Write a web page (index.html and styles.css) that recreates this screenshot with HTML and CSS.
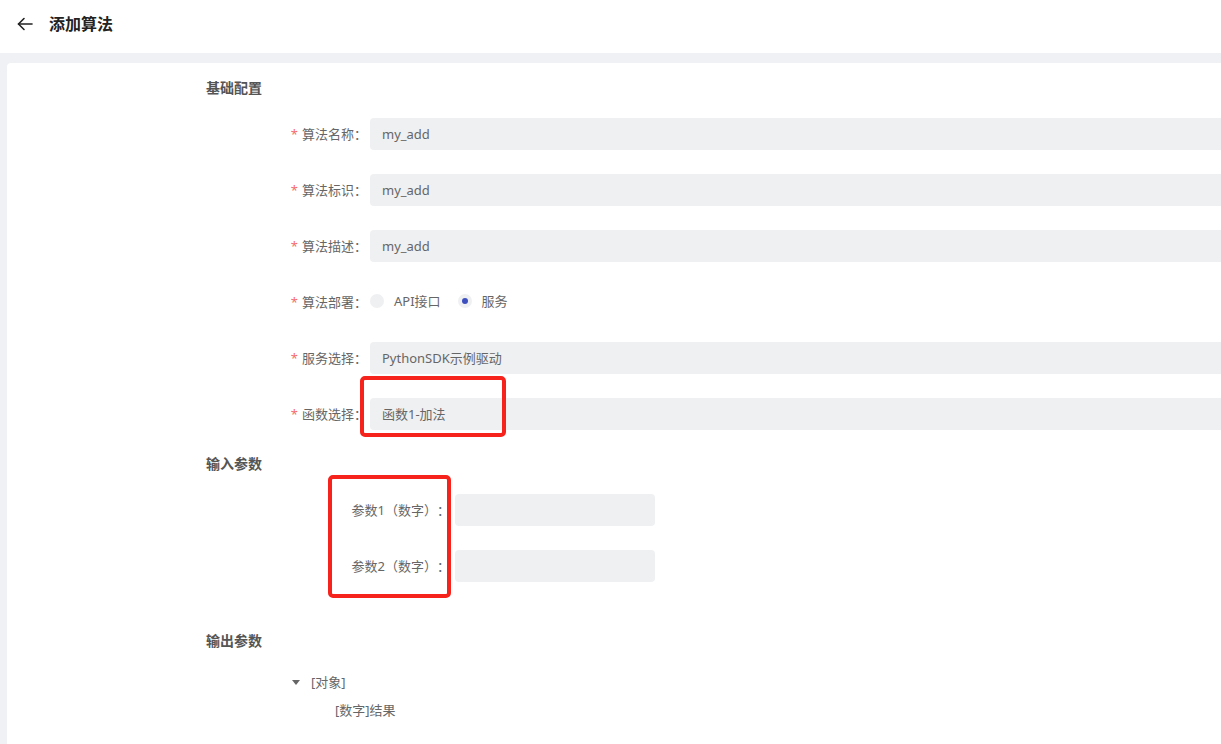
FILE: index.html
```html
<!DOCTYPE html>
<html lang="zh-CN">

<head>
    <meta charset="UTF-8">
    <meta name="viewport" content="width=device-width, initial-scale=1.0">
    <title>添加算法</title>
    <link rel="stylesheet" href="styles.css">
</head>

<body>
    <header class="topbar">
        <a href="javascript:void(0)" class="back">
            <svg width="18" height="18" viewBox="0 0 18 18" fill="none" stroke="#222" stroke-width="1.6" stroke-linecap="round" stroke-linejoin="round">
                <path d="M16 9H2.5" />
                <path d="M8 3.5L2.5 9L8 14.5" />
            </svg>
        </a>
        <h1 class="title">添加算法</h1>
    </header>
    <main class="page">
        <div class="card">
            <section class="block">
                <h2 class="block-title">基础配置</h2>
                <div class="row">
                    <label class="row-label"><i>*</i>算法名称：</label>
                    <div class="field">my_add</div>
                </div>
                <div class="row">
                    <label class="row-label"><i>*</i>算法标识：</label>
                    <div class="field">my_add</div>
                </div>
                <div class="row">
                    <label class="row-label"><i>*</i>算法描述：</label>
                    <div class="field">my_add</div>
                </div>
                <div class="row">
                    <label class="row-label"><i>*</i>算法部署：</label>
                    <div class="radios">
                        <span class="radio"><span class="dot"></span>API接口</span>
                        <span class="radio checked"><span class="dot"></span>服务</span>
                    </div>
                </div>
                <div class="row">
                    <label class="row-label"><i>*</i>服务选择：</label>
                    <div class="field">PythonSDK示例驱动</div>
                </div>
                <div class="row">
                    <label class="row-label"><i>*</i>函数选择：</label>
                    <div class="field">函数1-加法</div>
                </div>
            </section>

            <section class="block">
                <h2 class="block-title">输入参数</h2>
                <div class="row param">
                    <label class="row-label">参数1（数字）：</label>
                    <div class="field small"></div>
                </div>
                <div class="row param">
                    <label class="row-label">参数2（数字）：</label>
                    <div class="field small"></div>
                </div>
            </section>

            <section class="block out">
                <h2 class="block-title">输出参数</h2>
                <ul class="tree">
                    <li class="node">
                        <span class="caret"></span>[对象]
                    </li>
                    <li class="node child">[数字]结果</li>
                </ul>
            </section>

            <!-- 标注框 -->
            <div class="mark mark-1"></div>
            <div class="mark mark-2"></div>
        </div>
    </main>
</body>

</html>
```
FILE: styles.css
```css
* {
    box-sizing: border-box;
}

body {
    margin: 0;
    background-color: #f0f1f5;
    font-family: "Noto Sans", "Noto Sans CJK SC", sans-serif;
    font-size: 13px;
    color: #666;
    text-spacing-trim: space-all;
}

ul {
    list-style: none;
    margin: 0;
    padding: 0;
}

h1,
h2 {
    margin: 0;
}

.topbar {
    height: 53px;
    background-color: #fff;
    display: flex;
    align-items: center;
    padding: 0 0 5px 16px;
}

.topbar>.back {
    display: flex;
    width: 18px;
    height: 18px;
    margin-right: 15px;
}

.topbar>.title {
    font-size: 16px;
    font-weight: bold;
    color: #222;
    line-height: 22px;
}

.page {
    padding: 10px 0 0 7px;
    height: calc(100vh - 53px);
}

.card {
    position: relative;
    background-color: #fff;
    border-radius: 4px 0 0 0;
    height: 100%;
    padding: 15px 0 0 199px;
    overflow: hidden;
}

.block-title {
    font-size: 14px;
    font-weight: bold;
    color: #555;
    line-height: 20px;
    height: 20px;
    margin-bottom: 20px;
}

.row {
    display: flex;
    align-items: center;
    height: 32px;
    margin-bottom: 24px;
}

.row-label {
    width: 164px;
    flex-shrink: 0;
    text-align: right;
    padding-right: 3px;
    color: #666;
    line-height: 32px;
    white-space: nowrap;
}

.row-label>i {
    font-style: normal;
    color: #f56c6c;
    margin-right: 4px;
}

.field {
    flex: 1;
    height: 32px;
    line-height: 32px;
    background-color: #eff0f2;
    border-radius: 4px;
    padding: 0 12px;
    color: #666;
    margin-right: -8px;
}

.row.param>.row-label {
    width: 249px;
    padding-right: 5px;
}

.field.small {
    flex: none;
    width: 200px;
    margin-right: 0;
}

.radios {
    display: flex;
    align-items: center;
    gap: 17px;
    margin-top: -3px;
}

.radio {
    display: flex;
    align-items: center;
    color: #666;
}

.radio>.dot {
    width: 14px;
    height: 14px;
    border-radius: 50%;
    background-color: #eff0f2;
    margin-right: 10px;
    position: relative;
}

.radio.checked>.dot::after {
    content: "";
    position: absolute;
    left: 4px;
    top: 4px;
    width: 6px;
    height: 6px;
    border-radius: 50%;
    background-color: #3d4fbf;
}

.block.out {
    margin-top: 49px;
}

.block.out>.block-title {
    margin-bottom: 17px;
}

.tree {
    padding-left: 86px;
}

.tree>.node {
    height: 28px;
    line-height: 28px;
    display: flex;
    align-items: center;
    color: #666;
}

.tree>.node>.caret {
    width: 0;
    height: 0;
    border-left: 4px solid transparent;
    border-right: 4px solid transparent;
    border-top: 5px solid #666;
    margin-right: 11px;
}

.tree>.node.child {
    padding-left: 43px;
}

.mark {
    position: absolute;
    border: 4px solid #f5231b;
    border-radius: 5px;
}

.mark-1 {
    left: 353px;
    top: 313px;
    width: 146px;
    height: 61px;
}

.mark-2 {
    left: 321px;
    top: 412px;
    width: 123px;
    height: 123px;
}
```
